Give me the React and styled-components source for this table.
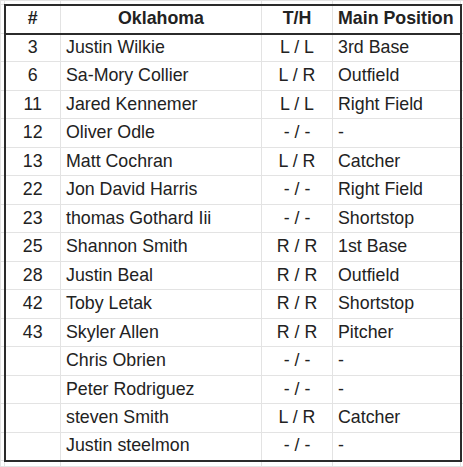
import React from "react";
import styled, { createGlobalStyle } from "styled-components";

const GlobalStyle = createGlobalStyle`
  html, body {
    margin: 0;
    padding: 0;
    background: #fff;
  }
  body {
    font-family: "Liberation Sans", Arial, sans-serif;
    color: #222;
  }
`;

const roster = [
  ["3", "Justin Wilkie", "L / L", "3rd Base"],
  ["6", "Sa-Mory Collier", "L / R", "Outfield"],
  ["11", "Jared Kennemer", "L / L", "Right Field"],
  ["12", "Oliver Odle", "- / -", "-"],
  ["13", "Matt Cochran", "L / R", "Catcher"],
  ["22", "Jon David Harris", "- / -", "Right Field"],
  ["23", "thomas Gothard Iii", "- / -", "Shortstop"],
  ["25", "Shannon Smith", "R / R", "1st Base"],
  ["28", "Justin Beal", "R / R", "Outfield"],
  ["42", "Toby Letak", "R / R", "Shortstop"],
  ["43", "Skyler Allen", "R / R", "Pitcher"],
  ["", "Chris Obrien", "- / -", "-"],
  ["", "Peter Rodriguez", "- / -", "-"],
  ["", "steven Smith", "L / R", "Catcher"],
  ["", "Justin steelmon", "- / -", "-"],
];

const Sheet = styled.table`
  border-collapse: collapse;
  table-layout: fixed;
  width: 463px;
  font-size: 17.8px;
  line-height: 1;
`;

const Row = styled.tr`
  height: ${(p) => p.$h}px;
`;

const Cell = styled.td`
  border: 1px solid #e3e3e3;
  padding: 0 5px;
  white-space: nowrap;
  overflow: hidden;
  text-align: ${(p) => p.$align || "left"};
  font-weight: ${(p) => (p.$bold ? 700 : 400)};
  border-top: ${(p) => (p.$top ? "2px solid #2b2b2b" : undefined)};
  border-bottom: ${(p) => (p.$bottom ? "2px solid #2b2b2b" : undefined)};
  border-left: ${(p) => (p.$left ? "2px solid #2b2b2b" : undefined)};
  border-right: ${(p) => (p.$right ? "2px solid #2b2b2b" : undefined)};
`;

const Stub = styled.td`
  border: 1px solid #e3e3e3;
  padding: 0;
`;

const aligns = ["center", "left", "center", "left"];

export default function App() {
  const last = roster.length - 1;
  return (
    <>
      <GlobalStyle />
      <Sheet>
        <colgroup>
          <col style={{ width: 4 }} />
          <col style={{ width: 56 }} />
          <col style={{ width: 201 }} />
          <col style={{ width: 71 }} />
          <col style={{ width: 128 }} />
          <col style={{ width: 3 }} />
        </colgroup>
        <tbody>
          <Row $h={4}>
            <Stub /><Stub /><Stub /><Stub /><Stub /><Stub />
          </Row>
          <Row $h={29}>
            <Stub />
            {["#", "Oklahoma", "T/H", "Main Position"].map((t, i) => (
              <Cell
                key={t}
                $bold
                $align={i === 3 ? "left" : "center"}
                $top
                $bottom
                $left={i === 0}
                $right={i === 3}
              >
                {t}
              </Cell>
            ))}
            <Stub />
          </Row>
          {roster.map((r, ri) => (
            <Row key={ri} $h={ri % 2 === 0 ? 28 : 29}>
              <Stub />
              {r.map((t, i) => (
                <Cell
                  key={i}
                  $align={aligns[i]}
                  $left={i === 0}
                  $right={i === 3}
                  $bottom={ri === last}
                >
                  {t}
                </Cell>
              ))}
              <Stub />
            </Row>
          ))}
          <Row $h={6}>
            <Stub /><Stub /><Stub /><Stub /><Stub /><Stub />
          </Row>
        </tbody>
      </Sheet>
    </>
  );
}
